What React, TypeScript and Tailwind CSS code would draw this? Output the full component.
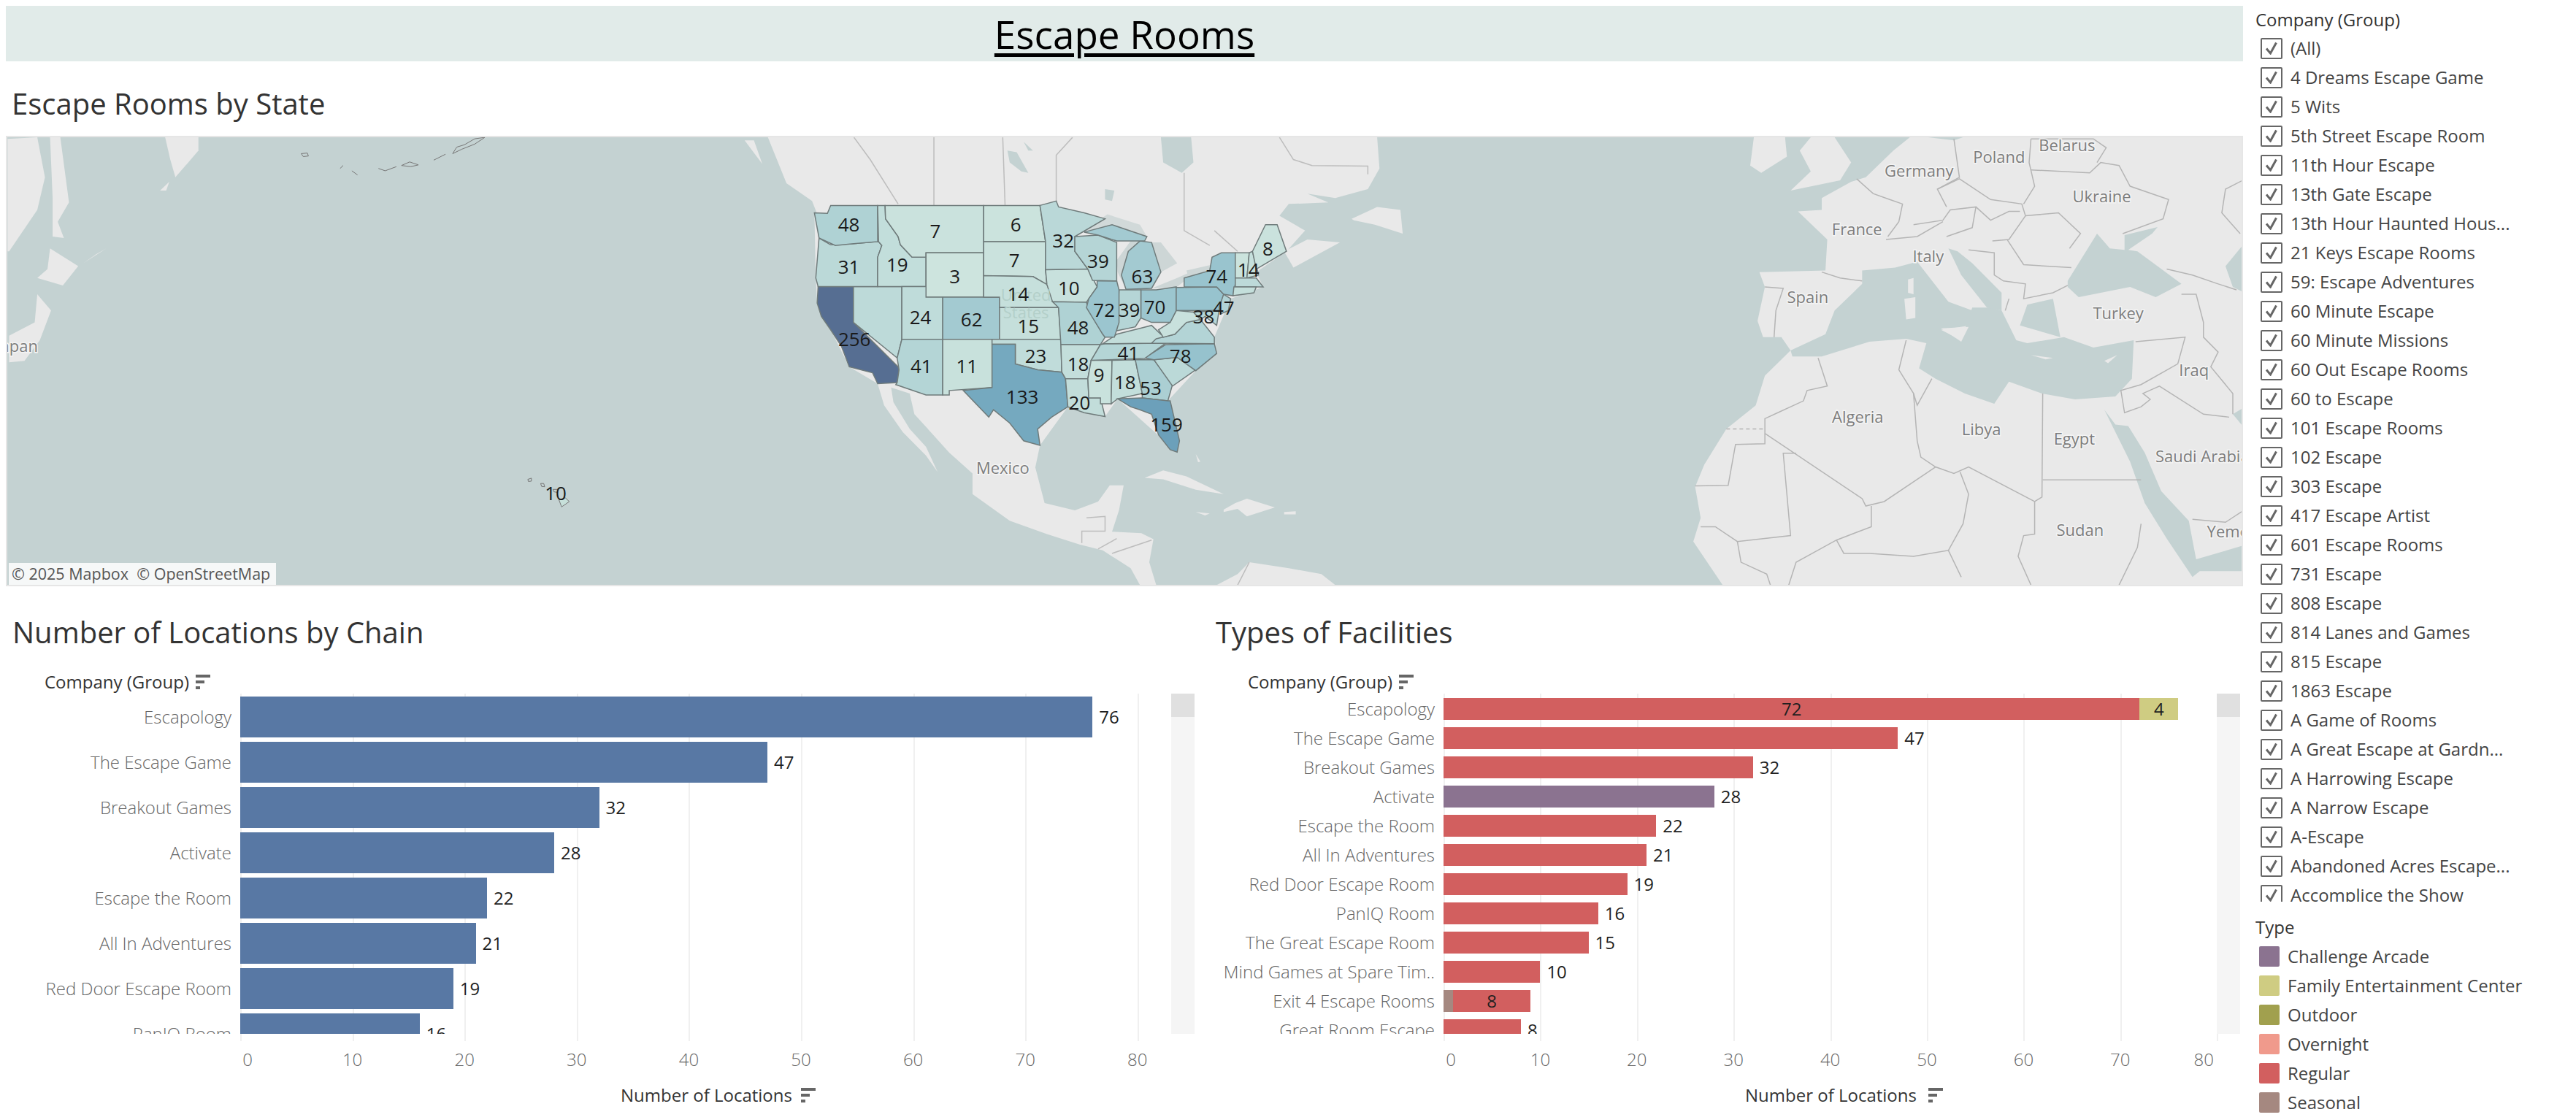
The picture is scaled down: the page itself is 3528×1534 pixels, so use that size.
const FONT = 'font-["Open_Sans","Noto_Sans",sans-serif]';

const WATER = '#c4d2d2';
const LAND = '#e9e9e9';

const COMPANIES = [
  '(All)', '4 Dreams Escape Game', '5 Wits', '5th Street Escape Room', '11th Hour Escape', '13th Gate Escape',
  '13th Hour Haunted Hous...', '21 Keys Escape Rooms', '59: Escape Adventures', '60 Minute Escape', '60 Minute Missions',
  '60 Out Escape Rooms', '60 to Escape', '101 Escape Rooms', '102 Escape', '303 Escape', '417 Escape Artist',
  '601 Escape Rooms', '731 Escape', '808 Escape', '814 Lanes and Games', '815 Escape', '1863 Escape', 'A Game of Rooms',
  'A Great Escape at Gardn...', 'A Harrowing Escape', 'A Narrow Escape', 'A-Escape', 'Abandoned Acres Escape...',
  'Accomplice the Show',
];

const TYPES = [
  { name: 'Challenge Arcade', cls: 'bg-[#8b7390]' },
  { name: 'Family Entertainment Center', cls: 'bg-[#cfcc82]' },
  { name: 'Outdoor', cls: 'bg-[#a1a04e]' },
  { name: 'Overnight', cls: 'bg-[#f09a8c]' },
  { name: 'Regular', cls: 'bg-[#d25f5f]' },
  { name: 'Seasonal', cls: 'bg-[#a58880]' },
];

const CHAIN_ROWS = [
  ['Escapology', 76], ['The Escape Game', 47], ['Breakout Games', 32], ['Activate', 28], ['Escape the Room', 22],
  ['All In Adventures', 21], ['Red Door Escape Room', 19], ['PanIQ Room', 16],
] as [string, number][];

type Seg = { v: number; color: string; label?: string };
const RED = '#d25f5f';
const TYPE_ROWS: { name: string; total?: number; segs: Seg[] }[] = [
  { name: 'Escapology', segs: [{ v: 72, color: RED, label: '72' }, { v: 4, color: '#cfcc82', label: '4' }] },
  { name: 'The Escape Game', total: 47, segs: [{ v: 47, color: RED }] },
  { name: 'Breakout Games', total: 32, segs: [{ v: 32, color: RED }] },
  { name: 'Activate', total: 28, segs: [{ v: 28, color: '#8b7390' }] },
  { name: 'Escape the Room', total: 22, segs: [{ v: 22, color: RED }] },
  { name: 'All In Adventures', total: 21, segs: [{ v: 21, color: RED }] },
  { name: 'Red Door Escape Room', total: 19, segs: [{ v: 19, color: RED }] },
  { name: 'PanIQ Room', total: 16, segs: [{ v: 16, color: RED }] },
  { name: 'The Great Escape Room', total: 15, segs: [{ v: 15, color: RED }] },
  { name: 'Mind Games at Spare Tim..', total: 10, segs: [{ v: 10, color: RED }] },
  { name: 'Exit 4 Escape Rooms', segs: [{ v: 1, color: '#a58880' }, { v: 8, color: RED, label: '8' }] },
  { name: 'Great Room Escape', total: 8, segs: [{ v: 8, color: RED }] },
];

// state outlines, traced in a 1568-wide crop of the map
const STATES: [number, string][] = [
  [256, '188,519 264,519 264,640 360,790 362,800 358,843 316,847 305,810 255,790 238,720 215,665 195,620 186,575'],
  [28, '264,519 368,519 368,697 358,760 264,640'],
  [31, '190,355 215,378 260,375 318,367 325,380 316,420 316,519 188,519 183,490'],
  [48, '180,270 208,272 215,245 316,245 316,367 260,375 225,380 190,355'],
  [19, '316,245 332,245 333,290 360,350 365,378 390,420 420,420 420,519 316,519 316,420 325,380 318,367'],
  [7, '332,245 544,245 544,405 420,405 420,420 390,420 365,378 360,350 333,290'],
  [3, '420,405 544,405 544,555 420,555'],
  [24, '368,519 420,519 420,555 456,555 456,697 368,697'],
  [62, '456,555 578,555 578,697 456,697'],
  [41, '368,697 456,697 456,885 420,885 355,850 358,843 362,800 358,760'],
  [11, '456,697 562,697 562,860 470,870 470,885 456,885'],
  [6, '544,245 665,245 677,367 544,367'],
  [7, '544,367 677,367 677,462 680,512 650,485 544,482'],
  [14, '544,482 650,485 680,512 695,570 705,590 578,590 578,555 544,555'],
  [15, '578,590 705,590 710,697 578,697'],
  [23, '562,697 710,697 712,808 660,800 612,780 612,714 562,714'],
  [133, '562,714 612,714 612,780 660,800 712,808 720,830 725,925 690,960 660,1000 665,1055 630,1040 600,980 565,935 555,960 500,870 562,860'],
  [32, '665,245 700,230 705,250 760,270 805,290 740,350 740,400 768,460 677,462 677,367'],
  [10, '677,462 768,460 788,520 770,560 765,572 692,570 680,512'],
  [48, '692,570 765,572 770,600 800,680 805,690 795,715 710,715 705,590'],
  [18, '710,715 795,715 775,770 768,830 720,830 712,808'],
  [20, '720,830 768,830 770,895 795,895 805,958 760,945 725,925'],
  [9, '775,768 820,768 818,915 795,915 795,895 770,895 768,830'],
  [18, '820,768 870,766 885,880 832,898 818,915'],
  [53, '870,766 910,766 950,850 940,905 885,895 885,880'],
  [159, '832,898 885,895 940,905 945,905 965,1040 960,1078 945,1070 920,1020 905,950 880,935 860,925'],
  [30, '910,766 960,758 1000,800 950,855'],
  [78, '890,760 935,715 1040,712 1045,745 1000,803 960,758 910,766'],
  [41, '795,715 805,712 935,710 890,762 775,768'],
  [20, '800,712 830,680 880,660 905,650 925,680 935,690 905,710 805,712'],
  [42, '915,695 955,680 980,640 1010,630 1040,690 1040,712 905,710'],
  [10, '920,665 945,640 958,600 995,605 1010,630 980,640 955,680 930,690'],
  [70, '882,530 915,530 958,520 958,600 945,640 905,640 882,625'],
  [39, '835,530 882,530 882,625 870,655 830,668'],
  [72, '788,500 830,500 835,530 835,640 825,690 805,690 800,680 765,590 770,560 788,520'],
  [39, '740,350 790,345 830,370 830,430 830,500 778,498 768,460 740,400'],
  [63, '855,400 880,365 905,370 925,470 905,525 850,528 840,480'],
  [63, '760,335 820,310 895,350 890,365 830,365 790,345'],
  [76, '958,522 1045,520 1060,545 1050,600 958,600'],
  [74, '975,490 1030,465 1035,420 1055,405 1085,405 1085,510 1080,550 1060,545 1045,520 975,520'],
  [47, '1060,545 1075,560 1070,600 1055,610 1050,590'],
  [38, '995,605 1050,600 1045,650 1020,620 1010,630'],
  [6, '1085,405 1115,405 1110,490 1085,490'],
  [14, '1115,405 1122,400 1135,480 1110,490'],
  [8, '1122,400 1150,310 1175,310 1195,400 1130,460'],
  [28, '1085,490 1130,490 1145,520 1085,520'],
  [16, '1082,520 1130,520 1125,540 1080,550'],
];

const STATE_LABELS: [string, number, number][] = [
  ['48', 254, 307], ['31', 254, 450], ['19', 358, 445], ['7', 440, 330], ['3', 482, 483], ['6', 613, 307], ['7', 610, 430],
  ['14', 618, 543], ['15', 640, 652], ['10', 727, 523], ['32', 715, 362], ['39', 790, 432], ['63', 885, 484], ['72', 803, 597],
  ['39', 857, 597], ['70', 912, 587], ['74', 1045, 484], ['14', 1113, 460], ['8', 1155, 390], ['38', 1017, 618], ['47', 1060, 590],
  ['24', 408, 622], ['62', 518, 630], ['48', 747, 655], ['256', 266, 695], ['41', 410, 787], ['11', 508, 787], ['23', 656, 753],
  ['133', 627, 890], ['18', 747, 780], ['41', 855, 742], ['78', 967, 753], ['9', 792, 817], ['18', 848, 840], ['53', 903, 860],
  ['20', 750, 910], ['159', 937, 984],
];

const EU_LABELS: [string, number, number][] = [
  ['Belarus', 1058, 40], ['Poland', 873, 80], ['Germany', 655, 128], ['Ukraine', 1153, 213], ['France', 486, 325], ['Italy', 680, 415],
  ['Spain', 352, 553], ['Turkey', 1198, 607], ['Iraq', 1404, 800], ['Algeria', 488, 957], ['Libya', 825, 1000], ['Egypt', 1078, 1033],
  ['Saudi Arabia', 1427, 1092], ['Sudan', 1094, 1340], ['Yemen', 1510, 1345],
];

const EU_BORDERS = [
  '390,470 440,490 500,500', '235,520 285,525 265,600 260,690', '485,155 530,205 575,225 610,240 600,300 570,350',
  '565,360 650,350 720,300', '750,20 765,150 705,190 730,250', '960,20 955,100 970,180 940,240',
  '705,190 765,155 850,225 935,240 945,280 900,360 855,365', '640,310 720,295 740,260 810,250 800,320 730,350',
  '810,250 850,295 900,265 930,265', '945,280 1035,270 1095,340 1065,390', '895,360 940,445 1070,455',
  '960,125 1120,135 1150,100 1200,110 1230,180 1335,225 1320,290 1210,340', '960,20 1130,20 1165,50 1140,100',
  '790,395 860,405 860,480 885,500 945,510 940,560 1020,540 1060,515', '890,600 900,560', '1330,460 1400,480 1470,510 1520,530',
  '1370,545 1410,545 1430,640 1430,690 1470,740 1450,790 1510,880 1510,950',
  '1245,705 1380,690 1360,780 1260,850 1205,870 1215,945 1260,925 1285,900 1265,880 1310,855 1430,950 1500,960',
  '1545,155 1490,190 1480,270 1530,340', '380,760 405,855 350,870 340,905 270,945 235,965 235,1050 155,1052 135,1190 45,1192',
  '235,1015 500,1235 510,1260 560,1245 700,1128', '320,1082 285,1082 305,1360 160,1380 100,1330 60,1330',
  '620,700 600,800 640,880 650,920 690,830', '640,880 650,1040 660,1095 700,1128 750,1150 790,1128 970,1245 990,1230 992,880',
  '992,1172 1260,1172', '767,1145 790,1220 775,1320 735,1410', '525,1260 525,1330 430,1375 320,1450 300,1527',
  '970,1245 970,1355 940,1360 925,1430 960,1527', '1260,1320 1250,1400 1200,1527', '160,1380 170,1450 240,1490 250,1527',
  '430,1375 450,1420 520,1420 640,1430 735,1410 770,1500', '1400,1305 1490,1315 1545,1270',
];

const NA_BORDERS = [
  '265,15 300,90 360,240', '437,15 437,245', '585,15 590,245', '735,15 700,75 700,230', '975,135 975,330 1030,380',
  '1180,15 1210,90 1250,110 1370,112 1370,140', '1040,330 1090,400', '765,1300 805,1295 805,1345 755,1345 755,1385',
  '790,1405 830,1370', '820,1420 905,1375', '1090,1527 1115,1450',
];

function stateColor(v: number) {
  const stops: [number, number[]][] = [
    [3, [205, 228, 222]], [50, [174, 209, 212]], [75, [152, 195, 206]], [133, [117, 169, 191]], [159, [108, 160, 186]], [256, [86, 110, 146]],
  ];
  for (let i = 1; i < stops.length; i++) {
    if (v <= stops[i][0]) {
      const t = (v - stops[i - 1][0]) / (stops[i][0] - stops[i - 1][0]);
      const c = stops[i - 1][1].map((a, k) => Math.round(a + (stops[i][1][k] - a) * t));
      return `rgb(${c.join(',')})`;
    }
  }
  return 'rgb(86,110,146)';
}

function Land({ points }: { points: string }) {
  return <polygon points={points} fill={LAND} />;
}

function Sea({ points }: { points: string }) {
  return <polygon points={points} fill={WATER} />;
}

function PlaceName({ x, y, children, anchor = 'middle' }: { x: number; y: number; children: string; anchor?: 'middle' | 'end' | 'start' }) {
  return (
    <text x={x} y={y} textAnchor={anchor} dominantBaseline="central" fontSize={22} fill="#7d7d7d" stroke="#f4f4f4" strokeWidth={3} paintOrder="stroke">
      {children}
    </text>
  );
}

function MapView() {
  const ux = (x: number) => 1000 + x * 0.6378;
  const uy = (y: number) => 180 + y * 0.4082;
  const ex = (x: number) => 2300 + x * 0.5033;

  return (
    <div className="relative h-[617px] w-full overflow-hidden border-2 border-[#e6e6e6] bg-[#c4d2d2]">
      <svg viewBox="8 186 3064 617" preserveAspectRatio="none" className={`block h-full w-full ${FONT}`}>
        {/* japan and kamchatka */}
        <g transform="translate(0,180) scale(0.7015,0.4082)">
          <Land points="12,20 70,15 85,150 70,260 15,400 12,400" />
          <Land points="95,15 115,15 132,235 110,300 122,355 100,350 100,220" />
          <Land points="320,15 385,15 385,60 340,150 330,90" />
          <Land points="310,195 328,165 322,195" />
          <Land points="95,390 150,450 120,515 70,490 90,460" />
          <Land points="70,545 97,600 75,700 45,770 15,775 15,685 65,640" />
          <Land points="160,440 205,390 185,410" />
          {/* aleutians */}
          <g fill="none" stroke="#777" strokeWidth="1" vectorEffect="non-scaling-stroke">
            <polygon points="586,70 598,68 600,78 590,80" vectorEffect="non-scaling-stroke" />
            <polyline points="662,120 668,110" vectorEffect="non-scaling-stroke" />
            <polyline points="685,128 696,142" vectorEffect="non-scaling-stroke" />
            <polyline points="737,120 750,128 772,114" vectorEffect="non-scaling-stroke" />
            <polygon points="782,110 798,98 815,108 800,114" vectorEffect="non-scaling-stroke" />
            <polyline points="845,92 868,72" vectorEffect="non-scaling-stroke" />
            <polygon points="882,70 890,48 905,40 925,20 945,15 925,38 900,55" vectorEffect="non-scaling-stroke" />
            {/* hawaii */}
            <polygon points="1090,1240 1102,1232 1110,1245 1095,1263" fill="#c7e0da" vectorEffect="non-scaling-stroke" />
            <polygon points="1029,1170 1036,1166 1036,1176 1030,1177" vectorEffect="non-scaling-stroke" />
            <polygon points="1054,1184 1060,1184 1062,1195 1056,1194" vectorEffect="non-scaling-stroke" />
            <polygon points="1078,1204 1088,1204 1086,1214 1080,1212" vectorEffect="non-scaling-stroke" />
          </g>
        </g>

        {/* north america */}
        <g transform="translate(1000,180) scale(0.6378,0.4082)">
          <Land points="30,25 50,25 68,105" />
          <Land points="80,15 120,170 175,230 185,270 180,270 183,490 186,575 215,665 255,790 316,847 330,920 370,1010 420,1090 445,1145 420,1060 385,1000 350,910 345,860 385,880 395,950 430,1010 470,1080 520,1150 520,1220 600,1310 680,1355 750,1390 800,1410 860,1470 880,1527 915,1527 900,1450 909,1372 883,1352 820,1347 835,1274 845,1190 815,1190 790,1245 740,1275 675,1250 655,1130 665,1055 725,925 805,958 832,898 960,1078 940,905 1000,803 1045,745 1040,690 1075,560 1145,520 1130,470 1195,400 1235,330 1180,280 1200,240 1285,235 1240,205 1300,220 1370,190 1395,120 1390,15 990,15 995,100 970,135 930,100 925,15" />
          <Land points="1190,400 1240,360 1310,370 1210,455" />
          <Land points="1335,290 1390,250 1440,260 1445,340 1385,310 1340,295" />
          <Land points="1045,1527 1090,1490 1115,1450 1200,1470 1270,1490 1300,1527" />
          <Land points="890,1165 930,1140 980,1160 1060,1220 1000,1205 930,1170" />
          <Land points="1085,1250 1110,1235 1170,1265 1110,1295 1090,1270 1060,1280 1060,1272" />
          <Land points="1000,1280 1030,1285 1020,1292" />
          <Land points="1190,1280 1215,1278 1215,1288 1190,1288" />
          <Land points="1000,1085 1010,1110 1005,1112" />
          <polygon points="595,60 615,65 640,135 625,130 600,100" fill={WATER} />
          <polygon points="805,190 825,195 820,230 805,225" fill={WATER} />
          <polygon points="630,30 650,60 640,60" fill={WATER} />
          {/* great lakes */}
          <polygon points="755,335 810,275 880,310 895,350 820,310" fill="#d1d9d9" />
          <polygon points="832,470 830,430 860,365 880,365 855,400 840,480 850,528" fill="#cdd6d6" />
          <polygon points="905,370 925,370 960,440 925,470" fill="#cdd6d6" />
          <polygon points="905,525 960,490 1010,455 960,520" fill="#cdd6d6" />
          <polygon points="980,465 1035,445 1030,465 985,490" fill="#cdd6d6" />
          {NA_BORDERS.map((p, i) => (
            <polyline key={i} points={p} fill="none" stroke="#bdbdbd" strokeWidth="1.5" vectorEffect="non-scaling-stroke" />
          ))}
          {STATES.map(([v, p], i) => (
            <polygon key={i} points={p} fill={stateColor(v)} stroke="#6f7b7b" strokeWidth="1.5" vectorEffect="non-scaling-stroke" />
          ))}
        </g>

        {/* europe, africa, middle east */}
        <rect x="2300" y="186" width="772" height="617" fill={LAND} />
        <g transform="translate(2300,180) scale(0.5033,0.4082)">
          <Sea points="0,15 630,15 585,60 510,150 470,165 390,220 390,260 325,265 405,360 400,465 220,470 235,520 215,635 230,690 280,690 305,735 235,820 210,920 130,1000 70,1120 45,1195 60,1300 40,1380 120,1527 0,1527" />
          <Sea points="680,15 775,15 750,25" />
          <Land points="205,15 290,15 295,80 225,135 195,110" />
          <Land points="360,15 425,15 470,100 440,160 305,195 360,130 330,60" />
          <Sea points="305,735 400,680 425,600 500,510 500,465 590,455 650,435 735,570 800,600 795,650 715,665 770,700 800,590 850,590 880,600 920,700 950,710 1050,690 1130,725 1240,700 1235,830 1190,890 1080,900 990,880 900,840 860,915 780,880 700,830 655,795 675,710 620,695 520,705 390,755 310,755" />
          <Sea points="760,400 800,440 880,540 880,600 840,590 770,480 735,390" />
          <Sea points="950,580 1020,560 1040,690 930,650" />
          <Sea points="1060,500 1140,340 1175,390 1215,395 1215,345 1305,318 1290,340 1225,395 1250,400 1370,510 1300,555 1230,520 1090,555 1060,520" />
          <Sea points="1160,935 1190,985 1225,990 1270,1080 1315,1210 1390,1310 1410,1440 1548,1390 1548,1480 1420,1480 1400,1500 1330,1370 1270,1250 1230,1110 1190,1010" />
          <Sea points="1490,450 1550,360 1550,545 1510,520" />
          <Sea points="1510,950 1550,920 1550,1010" />
          <Land points="625,495 640,490 640,545 625,540" />
          <Land points="615,560 645,555 645,625 620,630" />
          <Land points="715,660 790,655 770,705" />
          <Land points="960,750 1020,760 1000,765" />
          <Land points="1160,770 1195,750 1170,778" />
          {EU_BORDERS.map((p, i) => (
            <polyline key={i} points={p} fill="none" stroke="#b5b5b5" strokeWidth="1.5" vectorEffect="non-scaling-stroke" />
          ))}
          <polyline points="130,1000 235,1000" fill="none" stroke="#b5b5b5" strokeWidth="1.5" strokeDasharray="5 4" vectorEffect="non-scaling-stroke" />
        </g>

        <text x={ux(635)} y={uy(545)} textAnchor="middle" dominantBaseline="central" fontSize={22} fill="#b3cfc9">United</text>
        <text x={ux(635)} y={uy(605)} textAnchor="middle" dominantBaseline="central" fontSize={22} fill="#b3cfc9">States</text>
        <PlaceName x={ux(585)} y={uy(1130)}>Mexico</PlaceName>
        <PlaceName x={50} y={473} anchor="end">Japan</PlaceName>
        {EU_LABELS.map(([t, x, y]) => (
          <PlaceName key={t} x={ex(x)} y={uy(y)}>{t}</PlaceName>
        ))}

        {STATE_LABELS.map(([t, x, y], i) => (
          <text key={i} x={ux(x)} y={uy(y)} textAnchor="middle" dominantBaseline="central" fontSize={26} fill="#1a1a1a">{t}</text>
        ))}
        <text x={760} y={676} textAnchor="middle" dominantBaseline="central" fontSize={26} fill="#1a1a1a">10</text>
      </svg>
      <div className="absolute bottom-0 left-[2px] flex h-[30px] w-[366px] items-center bg-white/85 pl-[4px] text-[21.5px] whitespace-pre text-[#555]">
        © 2025 Mapbox  © OpenStreetMap
      </div>
    </div>
  );
}

function SortIcon() {
  return (
    <svg width="20" height="20" viewBox="0 0 20 20" className="shrink-0">
      <rect x="0" y="0" width="20" height="4" fill="#666" />
      <rect x="0" y="8" width="12" height="4" fill="#666" />
      <rect x="0" y="16" width="6" height="4" fill="#666" />
    </svg>
  );
}

function AxisTicks({ zero, unit, axisLeft, lastShift }: { zero: number; unit: number; axisLeft: number; lastShift: number }) {
  const ticks = [0, 10, 20, 30, 40, 50, 60, 70, 80];
  return (
    <>
      <div className="pointer-events-none absolute top-0 left-0 h-[476px] w-full">
        {ticks.map(t => (
          <div key={t} className="absolute top-0 h-full w-[2px] bg-[#f0f0f0]" style={{ left: zero - axisLeft + t * unit }} />
        ))}
      </div>
      <div className="absolute top-[484px] left-0 h-[34px] w-full text-[24px] leading-[34px] font-light text-[#666]">
        {ticks.map(t => (
          <span
            key={t}
            className="absolute -translate-x-1/2"
            style={{ left: zero - axisLeft + t * unit + (t === 0 ? 10 : t === 80 ? lastShift : 0) }}
          >
            {t}
          </span>
        ))}
      </div>
    </>
  );
}

function ScrollTrack() {
  return (
    <div className="absolute top-0 right-0 h-[466px] w-[32px] bg-[#f5f5f5]">
      <div className="h-[32px] w-full bg-[#e0e0e0]" />
    </div>
  );
}

function ChainChart() {
  const unit = 15.36;
  return (
    <div className="w-[1644px] shrink-0 pl-[9px]">
      <h2 className="flex h-[102px] items-center pt-[24px] text-[40px] leading-none font-medium text-[#333]">Number of Locations by Chain</h2>
      <div className="flex h-[45px] items-center gap-[9px] pl-[44px] pt-[12px] text-[24px] font-medium text-[#333]">
        Company (Group)
        <SortIcon />
      </div>
      <div className="relative ml-[-9px] h-[554px] w-[1628px]">
        <AxisTicks zero={329} unit={unit} axisLeft={8} lastShift={0} />
        <div className="relative h-[466px] overflow-hidden pt-[4px]">
          {CHAIN_ROWS.map(([name, v]) => (
            <div key={name} className="mb-[6px] flex h-[56px] items-center">
              <div className="w-[309px] shrink-0 text-right text-[24px] font-light text-[#666]">{name}</div>
              <div className="ml-[12px] h-full bg-[#5878a4]" style={{ width: v * unit }} />
              <div className="ml-[9px] text-[24px] text-[#1f1f1f]">{v}</div>
            </div>
          ))}
        </div>
        <ScrollTrack />
        <div className="absolute top-[534px] left-[842px] flex items-center gap-[12px] text-[24px] leading-[32px] font-medium text-[#333]">
          Number of Locations
          <SortIcon />
        </div>
      </div>
    </div>
  );
}

function TypeChart() {
  const unit = 13.24;
  return (
    <div className="w-[1420px] shrink-0 pl-[13px]">
      <h2 className="flex h-[102px] items-center pt-[24px] text-[40px] leading-none font-medium text-[#333]">Types of Facilities</h2>
      <div className="flex h-[45px] items-center gap-[9px] pl-[44px] pt-[12px] text-[24px] font-medium text-[#333]">
        Company (Group)
        <SortIcon />
      </div>
      <div className="relative ml-[-13px] h-[554px] w-[1416px]">
        <AxisTicks zero={1977} unit={unit} axisLeft={1652} lastShift={-18} />
        <div className="relative h-[466px] overflow-hidden pt-[6px]">
          {TYPE_ROWS.map(row => (
            <div key={row.name} className="mb-[10px] flex h-[30px] items-center">
              <div className="w-[313px] shrink-0 text-right text-[24px] font-light whitespace-nowrap text-[#666]">{row.name}</div>
              <div className="ml-[12px] flex h-full">
                {row.segs.map((s, i) => (
                  <div
                    key={i}
                    className="flex h-full items-center justify-center text-[24px] text-[#1f1f1f]"
                    style={{ width: s.v * unit, backgroundColor: s.color }}
                  >
                    {s.label}
                  </div>
                ))}
              </div>
              {row.total !== undefined && <div className="ml-[9px] text-[24px] text-[#1f1f1f]">{row.total}</div>}
            </div>
          ))}
        </div>
        <ScrollTrack />
        <div className="absolute top-[534px] left-[738px] flex items-center gap-[16px] text-[24px] leading-[32px] font-medium text-[#333]">
          Number of Locations
          <SortIcon />
        </div>
      </div>
    </div>
  );
}

function CheckBox() {
  return (
    <span className="flex h-[29px] w-[30px] shrink-0 items-center justify-center rounded-[2px] border-2 border-[#666]">
      <svg width="18" height="18" viewBox="0 0 18 18" fill="none">
        <path d="M2 9.5 L7.5 16 L15.5 1.5" stroke="#666" strokeWidth="3" />
      </svg>
    </span>
  );
}

function Sidebar() {
  return (
    <aside className="w-[456px] shrink-0 text-[24px] text-[#444]">
      <div className="flex h-[46px] items-center pt-[8px] pl-[17px] text-[24px] font-medium text-[#333]">Company (Group)</div>
      <div className="h-[1189px] overflow-hidden pl-[24px]">
        {COMPANIES.map(c => (
          <div key={c} className="flex h-[40px] items-center gap-[11px] whitespace-nowrap">
            <CheckBox />
            {c}
          </div>
        ))}
      </div>
      <div className="flex h-[55px] items-center pt-[15px] pl-[17px] text-[24px] font-medium text-[#333]">Type</div>
      <div className="pl-[22px]">
        {TYPES.map(t => (
          <div key={t.name} className="flex h-[40px] items-center gap-[11px] whitespace-nowrap">
            <span className={`h-[28px] w-[28px] shrink-0 rounded-[2px] ${t.cls}`} />
            {t.name}
          </div>
        ))}
      </div>
    </aside>
  );
}

export default function App() {
  return (
    <div className={`flex h-[1534px] w-[3528px] overflow-hidden bg-white ${FONT}`}>
      <main className="ml-[8px] w-[3064px] shrink-0 pt-[8px]">
        <div className="flex h-[76px] items-center justify-center bg-[#e1ebe9]">
          <h1 className="text-[53px] leading-none font-medium text-black underline decoration-[5px] underline-offset-[6px]">Escape Rooms</h1>
        </div>
        <h2 className="flex h-[102px] items-center pl-[8px] pt-[14px] text-[40px] leading-none font-medium text-[#333]">Escape Rooms by State</h2>
        <MapView />
        <div className="flex">
          <ChainChart />
          <TypeChart />
        </div>
      </main>
      <Sidebar />
    </div>
  );
}
